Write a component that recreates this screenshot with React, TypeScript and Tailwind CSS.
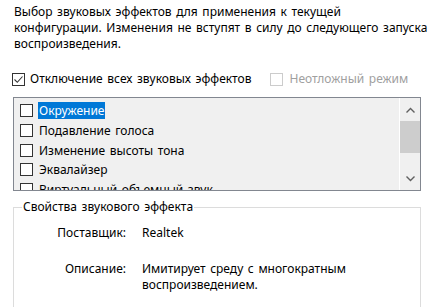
import React from "react";

const effects = [
   "Окружение",
   "Подавление голоса",
   "Изменение высоты тона",
   "Эквалайзер",
   "Виртуальный объемный звук",
];

function Box({ checked, disabled }: { checked?: boolean; disabled?: boolean }) {
   return (
      <span
         className={`flex h-[13px] w-[13px] shrink-0 items-center justify-center border bg-white ${
            disabled ? "border-[#cccccc]" : "border-[#333333]"
         }`}
      >
         {checked && (
            <svg width="11" height="11" viewBox="0 0 11 11" fill="none">
               <path d="M1.5 5.5l2.8 2.8L9.5 2.5" stroke="#333" strokeWidth="1.1" />
            </svg>
         )}
      </span>
   );
}

export default function App() {
   return (
      <div
         className="h-[307px] w-[431px] overflow-hidden bg-white text-[12px] leading-[16px] text-black [word-spacing:1.5px]"
         style={{ fontFamily: '"Noto Sans", "DejaVu Sans", sans-serif' }}
      >
         {/* Intro */}
         <p className="pl-[14px] pr-[4px] pt-[4px] whitespace-nowrap">
            Выбор звуковых эффектов для применения к текущей
            <br />
            конфигурации. Изменения не вступят в силу до следующего запуска
            <br />
            воспроизведения.
         </p>

         {/* Checkboxes */}
         <div className="mt-[19px] flex items-center pl-[12px]">
            <label className="flex items-center gap-[5px]">
               <Box checked />
               <span>Отключение всех звуковых эффектов</span>
            </label>
            <label className="ml-[19px] flex items-center gap-[6px] text-[#a0a0a0]">
               <Box disabled />
               <span>Неотложный режим</span>
            </label>
         </div>

         {/* Effect list */}
         <div className="ml-[13px] mt-[10px] flex h-[94px] w-[408px] overflow-hidden border border-[#828790] bg-[#f0f0f0]">
            <div className="flex-1 overflow-hidden pl-[6px] pt-[3px]">
               {effects.map((name, i) => (
                  <div key={name} className="flex h-[19.7px] items-center gap-[5px]">
                     <Box />
                     <span
                        className={`px-[1px] leading-[17px] ${
                           i === 0 ? "bg-[#0078d7] text-white" : ""
                        }`}
                     >
                        {name}
                     </span>
                  </div>
               ))}
            </div>
            <div className="flex w-[21px] flex-col items-center border-l border-white">
               <div className="flex h-[23px] w-full items-center justify-center">
                  <svg width="9" height="6" viewBox="0 0 9 6" fill="none">
                     <path d="M0.5 5.5L4.5 1.5l4 4" stroke="#606060" strokeWidth="1.4" />
                  </svg>
               </div>
               <div className="h-[32px] w-full bg-[#cdcdcd]" />
               <div className="flex-1" />
               <div className="flex h-[23px] w-full items-center justify-center">
                  <svg width="9" height="6" viewBox="0 0 9 6" fill="none">
                     <path d="M0.5 0.5L4.5 4.5l4-4" stroke="#606060" strokeWidth="1.4" />
                  </svg>
               </div>
            </div>
         </div>

         {/* Properties group */}
         <fieldset className="ml-[13px] mt-[8px] h-[140px] w-[408px] border border-[#dcdcdc] px-[8px]">
            <legend className="px-[1px]">Свойства звукового эффекта</legend>
            <div className="mt-[10px] grid grid-cols-[104px_1fr] gap-x-[16px] gap-y-[20px]">
               <span className="text-right">Поставщик:</span>
               <span>Realtek</span>
               <span className="text-right">Описание:</span>
               <span>
                  Имитирует среду с многократным
                  <br />
                  воспроизведением.
               </span>
            </div>
         </fieldset>
      </div>
   );
}
